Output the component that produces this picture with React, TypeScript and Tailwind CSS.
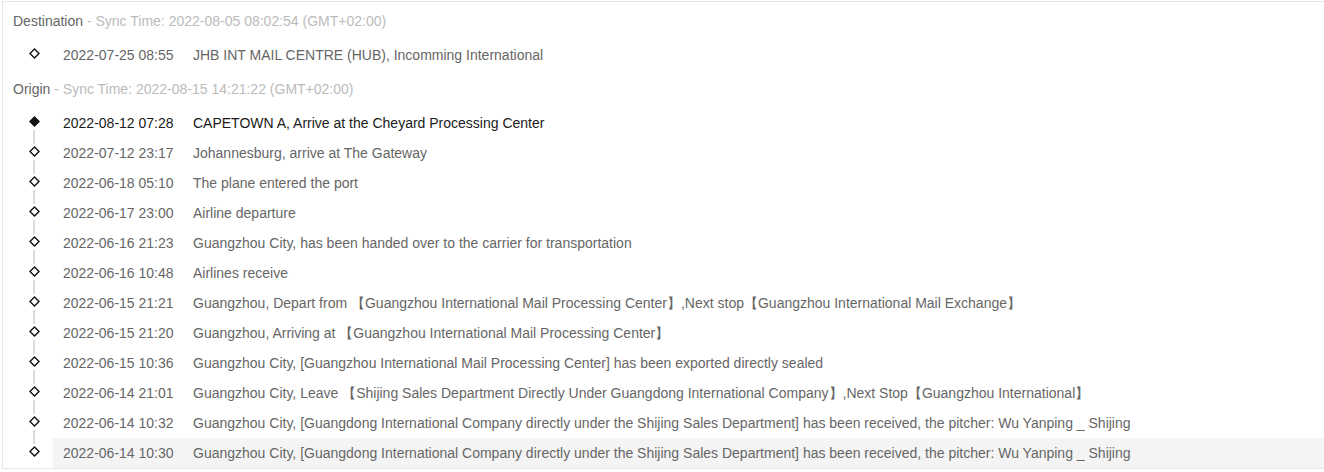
type TrackEvent = {
  time: string;
  desc: string;
};

type TrackGroup = {
  label: string;
  sync: string;
  events: TrackEvent[];
};

const groups: TrackGroup[] = [
  {
    label: "Destination",
    sync: "2022-08-05 08:02:54 (GMT+02:00)",
    events: [
      {
        time: "2022-07-25 08:55",
        desc: "JHB INT MAIL CENTRE (HUB), Incomming International",
      },
    ],
  },
  {
    label: "Origin",
    sync: "2022-08-15 14:21:22 (GMT+02:00)",
    events: [
      {
        time: "2022-08-12 07:28",
        desc: "CAPETOWN A, Arrive at the Cheyard Processing Center",
      },
      {
        time: "2022-07-12 23:17",
        desc: "Johannesburg, arrive at The Gateway",
      },
      { time: "2022-06-18 05:10", desc: "The plane entered the port" },
      { time: "2022-06-17 23:00", desc: "Airline departure" },
      {
        time: "2022-06-16 21:23",
        desc: "Guangzhou City, has been handed over to the carrier for transportation",
      },
      { time: "2022-06-16 10:48", desc: "Airlines receive" },
      {
        time: "2022-06-15 21:21",
        desc: "Guangzhou, Depart from 【Guangzhou International Mail Processing Center】,Next stop【Guangzhou International Mail Exchange】",
      },
      {
        time: "2022-06-15 21:20",
        desc: "Guangzhou, Arriving at 【Guangzhou International Mail Processing Center】",
      },
      {
        time: "2022-06-15 10:36",
        desc: "Guangzhou City, [Guangzhou International Mail Processing Center] has been exported directly sealed",
      },
      {
        time: "2022-06-14 21:01",
        desc: "Guangzhou City, Leave 【Shijing Sales Department Directly Under Guangdong International Company】,Next Stop【Guangzhou International】",
      },
      {
        time: "2022-06-14 10:32",
        desc: "Guangzhou City, [Guangdong International Company directly under the Shijing Sales Department] has been received, the pitcher: Wu Yanping _ Shijing",
      },
      {
        time: "2022-06-14 10:30",
        desc: "Guangzhou City, [Guangdong International Company directly under the Shijing Sales Department] has been received, the pitcher: Wu Yanping _ Shijing",
      },
    ],
  },
];

function Diamond({ filled }: { filled: boolean }): JSX.Element {
  return (
    <svg width={11} height={11} viewBox="0 0 11 11" className="shrink-0">
      <polygon
        points="5.5,1 10,5.5 5.5,10 1,5.5"
        fill={filled ? "#111" : "#fff"}
        stroke="#111"
        strokeWidth="1.4"
      />
    </svg>
  );
}

function EventRow({
  ev,
  first,
  last,
  active,
  hovered,
}: {
  ev: TrackEvent;
  first: boolean;
  last: boolean;
  active: boolean;
  hovered: boolean;
}): JSX.Element {
  return (
    <div className="flex h-[30px] items-stretch">
      <div className="w-[50px] flex flex-col items-center pl-[12px]">
        <div className="h-[8px] flex justify-center">
          {!first && <span className="w-[2px] mb-[2px] bg-[#dcdcdc]" />}
        </div>
        <Diamond filled={active} />
        <div className="flex-1 flex justify-center">
          {!last && <span className="w-[2px] mt-[3px] bg-[#dcdcdc]" />}
        </div>
      </div>
      <div
        className={
          "flex-1 flex items-center pl-[10px] whitespace-nowrap " +
          (hovered ? "bg-[#f4f4f4] " : "") +
          (active ? "text-[#1a1a1a]" : "text-[#666]")
        }
      >
        <span className="w-[130px] shrink-0">{ev.time}</span>
        <span>{ev.desc}</span>
      </div>
    </div>
  );
}

export default function App(): JSX.Element {
  return (
    <div className="w-[1324px] h-[472px] bg-white overflow-hidden font-['Liberation_Sans',Arial,sans-serif] text-[14px]">
      <div className="ml-[2px] mt-[1px] border-l border-t border-b border-[#e3e5ea] pt-[2px]">
        {groups.map((g, gi) => (
          <div key={g.label} className={gi > 0 ? "mt-[2px]" : ""}>
            <div className="h-[34px] flex items-center pl-[10px] whitespace-nowrap">
              <span className="text-[#666]">{g.label}</span>
              <span className="text-[#bbb]">&nbsp;- Sync Time: {g.sync}</span>
            </div>
            <div className="mt-[2px]">
              {g.events.map((ev, i) => (
                <EventRow
                  key={ev.time + i}
                  ev={ev}
                  first={i === 0}
                  last={i === g.events.length - 1}
                  active={gi === 1 && i === 0}
                  hovered={gi === 1 && i === g.events.length - 1}
                />
              ))}
            </div>
          </div>
        ))}
      </div>
    </div>
  );
}
